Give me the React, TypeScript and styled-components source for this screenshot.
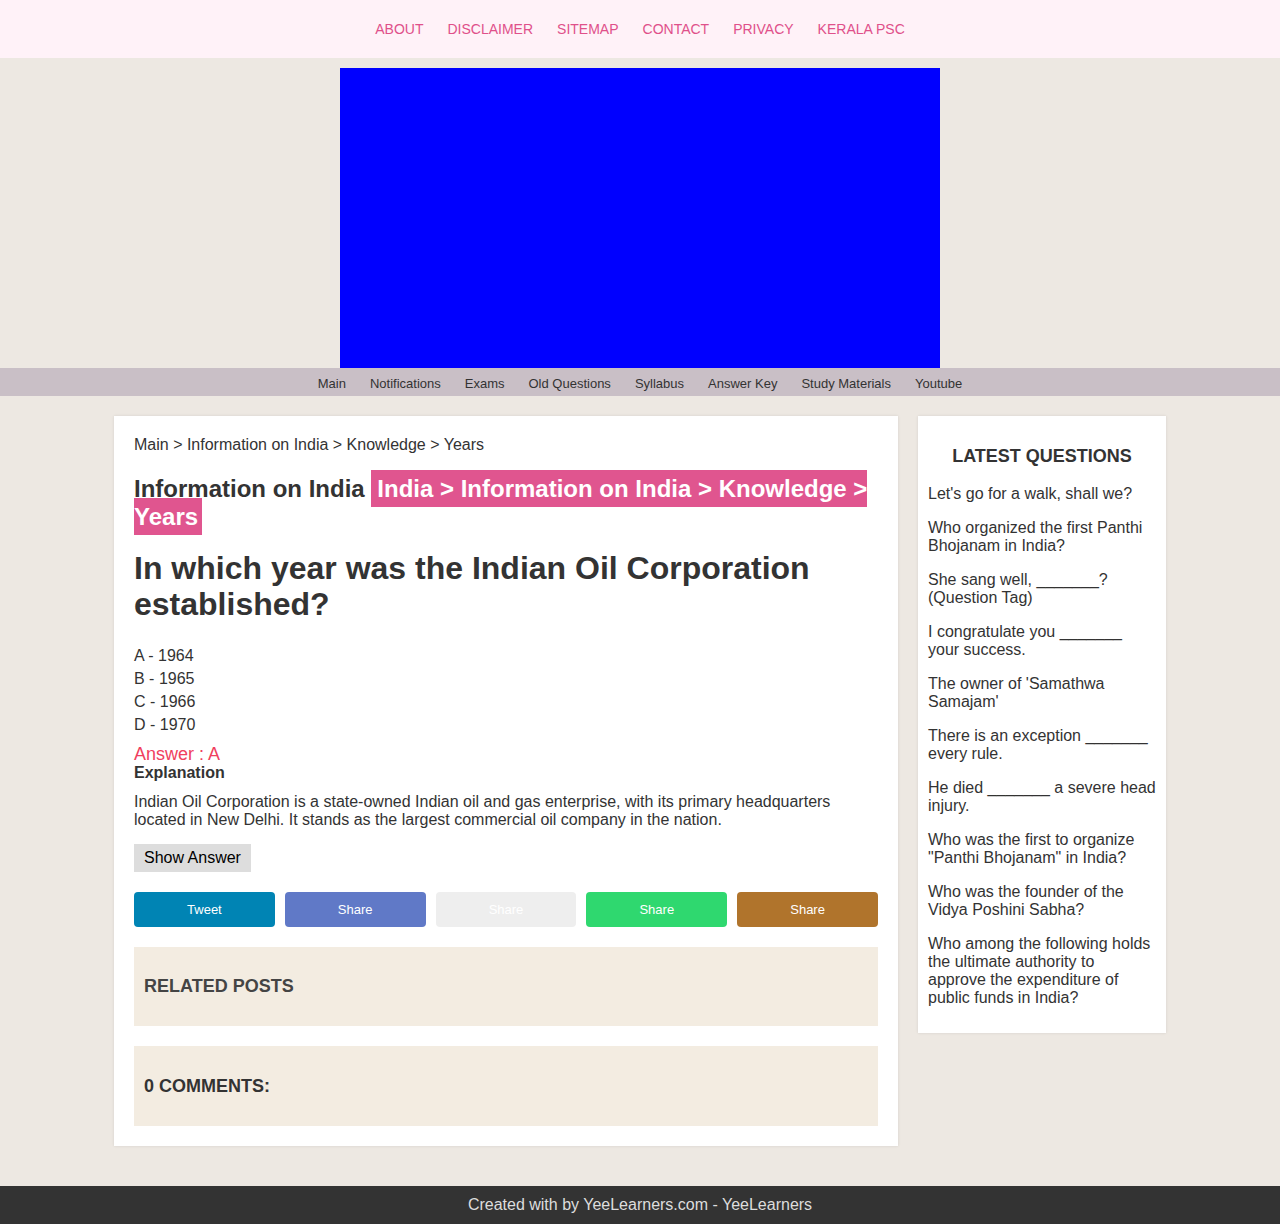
import React from "react";
import styled, { createGlobalStyle } from "styled-components";

const GlobalStyle = createGlobalStyle`
  html, body {
    margin: 0;
    padding: 0;
    background: #ede8e2;
    font-family: "Liberation Sans", Arial, sans-serif;
    color: #333;
  }
`;

const topLinks = ["ABOUT", "DISCLAIMER", "SITEMAP", "CONTACT", "PRIVACY", "KERALA PSC"];
const menuLinks = [
  "Main",
  "Notifications",
  "Exams",
  "Old Questions",
  "Syllabus",
  "Answer Key",
  "Study Materials",
  "Youtube",
];
const options = ["A - 1964", "B - 1965", "C - 1966", "D - 1970"];
const shares = [
  { label: "Tweet", bg: "#0084b4" },
  { label: "Share", bg: "#6079c7" },
  { label: "Share", bg: "#eeeeee" },
  { label: "Share", bg: "#2fd86f" },
  { label: "Share", bg: "#b0742c" },
];
const latest = [
  "Let's go for a walk, shall we?",
  "Who organized the first Panthi Bhojanam in India?",
  "She sang well, _______? (Question Tag)",
  "I congratulate you _______ your success.",
  "The owner of 'Samathwa Samajam'",
  "There is an exception _______ every rule.",
  "He died _______ a severe head injury.",
  'Who was the first to organize "Panthi Bhojanam" in India?',
  "Who was the founder of the Vidya Poshini Sabha?",
  "Who among the following holds the ultimate authority to approve the expenditure of public funds in India?",
];

const App = () => {
  return (
    <>
      <GlobalStyle />
      <TopBar>
        {topLinks.map((l) => (
          <TopLink key={l} href="#">
            {l}
          </TopLink>
        ))}
      </TopBar>
      <Banner />
      <MenuBar>
        {menuLinks.map((l) => (
          <MenuLink key={l} href="#">
            {l}
          </MenuLink>
        ))}
      </MenuBar>
      <Wrapper>
        <MainCard>
          <Crumbs>Main &gt; Information on India &gt; Knowledge &gt; Years</Crumbs>
          <Category>
            Information on India{" "}
            <Tag>India &gt; Information on India &gt; Knowledge &gt; Years</Tag>
          </Category>
          <Question>In which year was the Indian Oil Corporation established?</Question>
          <Options>
            {options.map((o) => (
              <li key={o}>{o}</li>
            ))}
          </Options>
          <Answer>Answer : A</Answer>
          <ExplainTitle>Explanation</ExplainTitle>
          <ExplainText>
            Indian Oil Corporation is a state-owned Indian oil and gas enterprise, with its
            primary headquarters located in New Delhi. It stands as the largest commercial oil
            company in the nation.
          </ExplainText>
          <ShowButton>Show Answer</ShowButton>
          <ShareRow>
            {shares.map((s, i) => (
              <ShareButton key={i} $bg={s.bg}>
                {s.label}
              </ShareButton>
            ))}
          </ShareRow>
          <Panel>
            <PanelTitle $color="#444">RELATED POSTS</PanelTitle>
          </Panel>
          <Panel $last>
            <PanelTitle $color="#333">0 COMMENTS:</PanelTitle>
          </Panel>
        </MainCard>
        <Sidebar>
          <SideTitle>LATEST QUESTIONS</SideTitle>
          {latest.map((q) => (
            <SideItem key={q} href="#">
              {q}
            </SideItem>
          ))}
        </Sidebar>
      </Wrapper>
      <Footer>Created with by YeeLearners.com - YeeLearners</Footer>
    </>
  );
};

export default App;

const TopBar = styled.nav`
  height: 58px;
  background: #fff2f8;
  display: flex;
  align-items: center;
  justify-content: center;
  gap: 24px;
`;

const TopLink = styled.a`
  color: #e0508a;
  font-size: 14px;
  text-decoration: none;
`;

const Banner = styled.div`
  width: 600px;
  height: 300px;
  margin: 10px auto 0;
  background: #0000ff;
`;

const MenuBar = styled.nav`
  height: 28px;
  box-sizing: border-box;
  padding-top: 3px;
  background: #c9bfc6;
  display: flex;
  align-items: center;
  justify-content: center;
  gap: 24px;
`;

const MenuLink = styled.a`
  color: #333;
  font-size: 13px;
  text-decoration: none;
`;

const Wrapper = styled.div`
  width: 1052px;
  margin: 20px auto 40px;
  display: flex;
  align-items: flex-start;
  gap: 20px;
`;

const MainCard = styled.main`
  width: 784px;
  box-sizing: border-box;
  background: #fff;
  padding: 20px;
  box-shadow: 0 0 3px rgba(0, 0, 0, 0.1);
`;

const Crumbs = styled.div`
  font-size: 16px;
  line-height: 18px;
  color: #333;
`;

const Category = styled.h2`
  margin: 21px 0 0;
  font-size: 24px;
  line-height: 28px;
  font-weight: bold;
  color: #333;
`;

const Tag = styled.span`
  background: #e0558f;
  color: #fff;
  padding: 5px 4px 5px 6px;
`;

const Question = styled.h1`
  margin: 19px 0 0;
  font-size: 32px;
  line-height: 36px;
  font-weight: bold;
  color: #333;
`;

const Options = styled.ul`
  list-style: none;
  margin: 22px 0 0;
  padding: 0;
  font-size: 16px;
  line-height: 23px;
`;

const Answer = styled.div`
  margin-top: 8px;
  font-size: 18px;
  line-height: 20px;
  color: #f0405e;
`;

const ExplainTitle = styled.div`
  font-size: 16px;
  line-height: 18px;
  font-weight: bold;
`;

const ExplainText = styled.p`
  margin: 11px 0 0;
  font-size: 16px;
  line-height: 18px;
`;

const ShowButton = styled.button`
  display: block;
  margin-top: 15px;
  border: none;
  background: #dddddd;
  color: #000;
  font-family: inherit;
  font-size: 16px;
  height: 28px;
  padding: 0 10px;
`;

const ShareRow = styled.div`
  margin-top: 20px;
  display: grid;
  grid-template-columns: repeat(5, 1fr);
  gap: 10px;
`;

const ShareButton = styled.button<{ $bg: string }>`
  height: 35px;
  border: none;
  border-radius: 4px;
  background: ${(p) => p.$bg};
  color: #fff;
  font-family: inherit;
  font-size: 13px;
`;

const Panel = styled.section<{ $last?: boolean }>`
  margin-top: 20px;
  height: ${(p) => (p.$last ? "80px" : "79px")};
  background: #f3ece1;
  padding: 0 10px;
  display: flex;
  align-items: center;
`;

const PanelTitle = styled.h3<{ $color: string }>`
  margin: 0;
  font-size: 18px;
  font-weight: bold;
  color: ${(p) => p.$color};
`;

const Sidebar = styled.aside`
  width: 248px;
  box-sizing: border-box;
  background: #fff;
  padding: 29px 10px 26px;
  box-shadow: 0 0 3px rgba(0, 0, 0, 0.1);
  display: flex;
  flex-direction: column;
  gap: 16px;
`;

const SideTitle = styled.h3`
  margin: 0 0 2px;
  text-align: center;
  font-size: 18px;
  line-height: 22px;
  font-weight: bold;
  color: #333;
`;

const SideItem = styled.a`
  font-size: 16px;
  line-height: 18px;
  color: #333;
  text-decoration: none;
`;

const Footer = styled.footer`
  height: 38px;
  background: #333;
  color: #ddd;
  font-size: 16px;
  display: flex;
  align-items: center;
  justify-content: center;
`;
